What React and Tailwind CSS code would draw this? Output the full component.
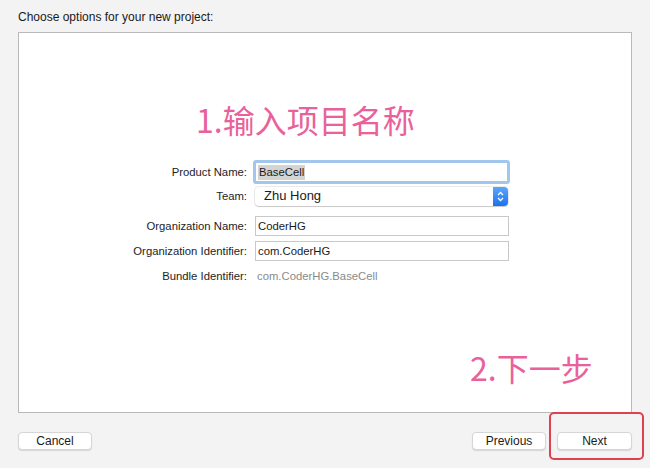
import React from 'react'

const sans = { fontFamily: '"Helvetica Neue", "Liberation Sans", Arial, sans-serif' }

function Row({ label, children, className = '' }) {
  return (
    <div className={'flex items-center h-[24px] ' + className}>
      <div className="w-[229px] text-right text-[11.3px] text-[#1d1d1d] pr-[1px]">{label}</div>
      <div className="ml-[6px] flex items-center">{children}</div>
    </div>
  )
}

function Field({ value }) {
  return (
    <div className="ml-[1px] w-[254px] h-[20px] bg-white border border-[#c9c9c9] flex items-center px-[2px] text-[11.3px] text-[#1a1a1a]">
      {value}
    </div>
  )
}

function Btn({ children, w }) {
  return (
    <button className={w + ' h-[18px] bg-white rounded-[4px] border border-[#d6d6d6] shadow-[0_1px_1px_rgba(0,0,0,0.12)] text-[12px] leading-[16px] text-[#1a1a1a]'}>
      {children}
    </button>
  )
}

export default function App() {
  return (
    <div className="relative w-[650px] h-[468px] bg-[#f3f3f3] px-[18px] overflow-hidden" style={sans}>
      <div className="h-[32px] pt-[9px] text-[12px] leading-[16px] text-[#1a1a1a]">Choose options for your new project:</div>

      <div className="h-[381px] bg-white border border-[#b9b9b9]">
        <div className="pt-[68px] ml-[177px] text-[32px] leading-[36px] text-[#e9619b]" style={{ fontFamily: '"Noto Sans CJK SC", sans-serif' }}>
          1.输入项目名称
        </div>

        <div className="mt-[23px]">
          <Row label="Product Name:">
            <div className="w-[257px] h-[24px] rounded-[3px] border-[3px] border-[#a3c6ef] bg-white flex items-center px-[2px] -ml-[1px]">
              <span className="bg-[#d4d4d4] text-[11.3px] leading-[15px] text-[#1a1a1a] px-[1px]">BaseCell</span>
            </div>
          </Row>
          <Row label="Team:">
            <div className="ml-[1px] w-[253px] h-[19px] bg-white rounded-[4px] shadow-[0_0_0_1px_rgba(0,0,0,0.08),0_1px_1px_rgba(0,0,0,0.15)] flex items-center">
              <span className="flex-1 pl-[9px] text-[13px] text-[#1a1a1a]">Zhu Hong</span>
              <div className="w-[15px] h-[19px] rounded-r-[4px] bg-gradient-to-b from-[#5aa6fb] to-[#1a72ef] flex items-center justify-center">
                <svg width="7" height="11" viewBox="0 0 7 11" fill="none" stroke="white" strokeWidth="1.3">
                  <path d="M1 4 L3.5 1.5 L6 4" />
                  <path d="M1 7 L3.5 9.5 L6 7" />
                </svg>
              </div>
            </div>
          </Row>
          <Row label="Organization Name:" className="mt-[6px]">
            <Field value="CoderHG" />
          </Row>
          <Row label="Organization Identifier:" className="mt-[1px]">
            <Field value="com.CoderHG" />
          </Row>
          <Row label="Bundle Identifier:" className="mt-[1px]">
            <span className="ml-[3px] text-[11.3px] text-[#8a8a8a]">com.CoderHG.BaseCell</span>
          </Row>
        </div>

        <div className="mt-[61px] ml-[451px] text-[32px] leading-[36px] text-[#e9619b]" style={{ fontFamily: '"Noto Sans CJK SC", sans-serif' }}>
          2.下一步
        </div>
      </div>

      <div className="mt-[19px] flex justify-between">
        <Btn w="w-[74px]">Cancel</Btn>
        <div className="flex gap-[11px]">
          <Btn w="w-[74px]">Previous</Btn>
          <Btn w="w-[75px]">Next</Btn>
        </div>
      </div>

      <div className="absolute left-[549px] top-[412px] w-[95px] h-[48px] border-2 border-[#e0414f] rounded-[5px]" />
    </div>
  )
}
